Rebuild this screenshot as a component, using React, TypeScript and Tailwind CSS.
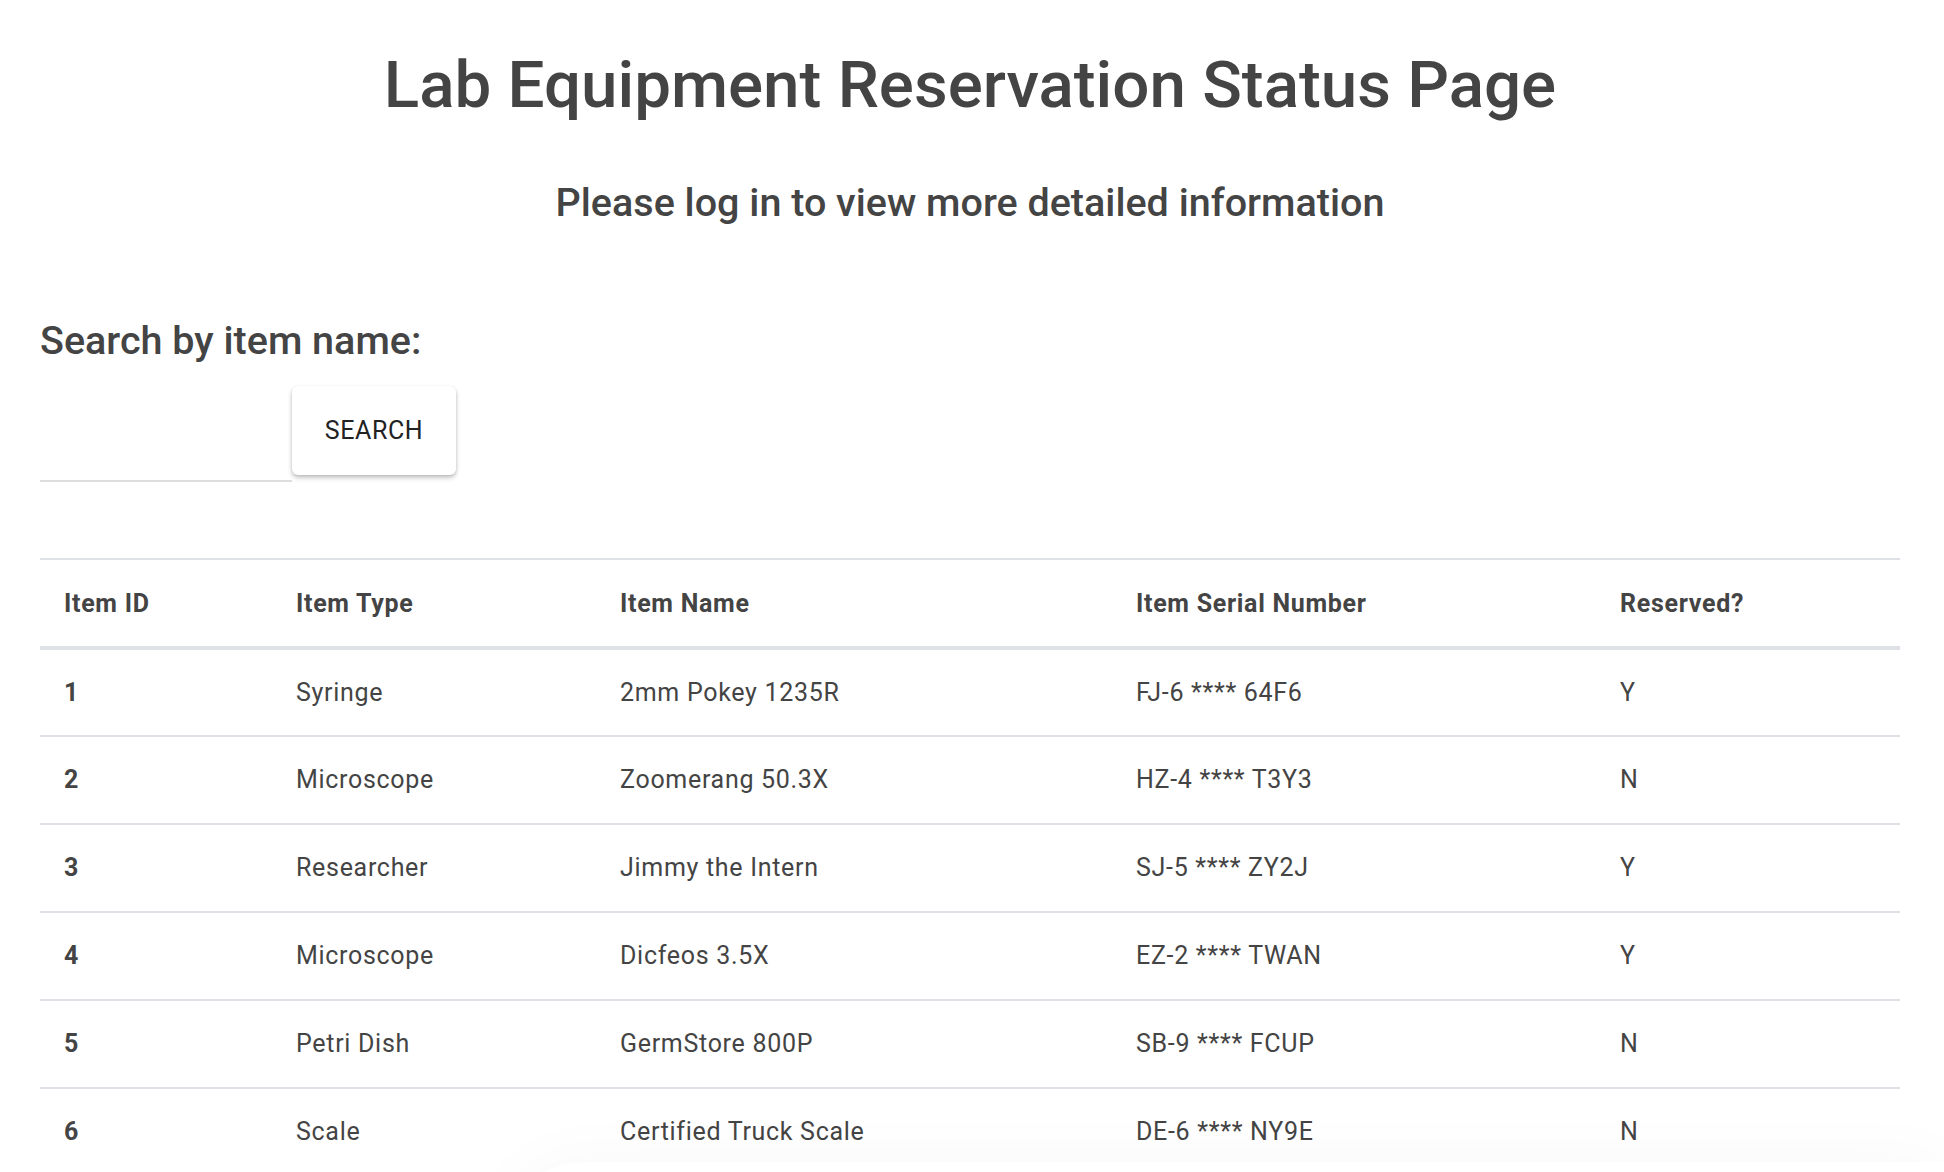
import React, { useState } from "react";

interface Item {
  id: number;
  type: string;
  name: string;
  serial: string;
  reserved: string;
}

const items: Item[] = [
  { id: 1, type: "Syringe", name: "2mm Pokey 1235R", serial: "FJ-6 **** 64F6", reserved: "Y" },
  { id: 2, type: "Microscope", name: "Zoomerang 50.3X", serial: "HZ-4 **** T3Y3", reserved: "N" },
  { id: 3, type: "Researcher", name: "Jimmy the Intern", serial: "SJ-5 **** ZY2J", reserved: "Y" },
  { id: 4, type: "Microscope", name: "Dicfeos 3.5X", serial: "EZ-2 **** TWAN", reserved: "Y" },
  { id: 5, type: "Petri Dish", name: "GermStore 800P", serial: "SB-9 **** FCUP", reserved: "N" },
  { id: 6, type: "Scale", name: "Certified Truck Scale", serial: "DE-6 **** NY9E", reserved: "N" },
];

const headers = ["Item ID", "Item Type", "Item Name", "Item Serial Number", "Reserved?"];

const App = () => {
  const [query, setQuery] = useState("");

  return (
    <div
      className="min-h-screen bg-white pl-[40px] pr-[44px] text-[#444]"
      style={{ fontFamily: "Roboto, 'Liberation Sans', sans-serif" }}
    >
      <h1 className="pt-[52px] text-center text-[65.5px] font-medium leading-[66px]">
        Lab Equipment Reservation Status Page
      </h1>
      <h2 className="mt-[65px] text-center text-[39.5px] font-medium leading-[40px]">
        Please log in to view more detailed information
      </h2>

      <h3 className="mt-[98px] text-[39.5px] font-medium leading-[40px]">Search by item name:</h3>
      <div className="mt-[25px] flex items-start">
        <input
          type="text"
          value={query}
          onChange={(e) => setQuery(e.target.value)}
          className="h-[96px] w-[252px] border-b-2 border-[#dddddd] bg-transparent text-[24px] outline-none"
        />
        <button
          type="button"
          className="h-[89px] w-[164px] rounded-[6px] bg-white text-[25px] tracking-[0.6px] text-[#222] shadow-[0_3px_5px_rgba(0,0,0,0.2),0_1px_3px_rgba(0,0,0,0.12)]"
        >
          SEARCH
        </button>
      </div>

      <table className="mt-[76px] w-full table-fixed border-collapse border-t-2 border-[#dee2e6] text-[25px] tracking-[0.7px]">
        <colgroup>
          <col className="w-[232px]" />
          <col className="w-[324px]" />
          <col className="w-[516px]" />
          <col className="w-[484px]" />
          <col className="w-[304px]" />
        </colgroup>
        <thead>
          <tr>
            {headers.map((h) => (
              <th
                key={h}
                className="h-[89px] border-b-4 border-[#dee2e6] px-[24px] pt-[2px] text-left align-middle font-bold"
              >
                {h}
              </th>
            ))}
          </tr>
        </thead>
        <tbody>
          {items.map((item) => (
            <tr key={item.id} className="h-[88px]">
              <td className="border-b-2 border-[#dee2e6] px-[24px] font-bold">{item.id}</td>
              <td className="border-b-2 border-[#dee2e6] px-[24px]">{item.type}</td>
              <td className="border-b-2 border-[#dee2e6] px-[24px]">{item.name}</td>
              <td className="border-b-2 border-[#dee2e6] px-[24px]">{item.serial}</td>
              <td className="border-b-2 border-[#dee2e6] px-[24px]">{item.reserved}</td>
            </tr>
          ))}
        </tbody>
      </table>

      {/* faint shadow of a panel sitting just below the fold */}
      <div className="pointer-events-none fixed bottom-[-90px] right-0 h-[100px] w-[1440px] rounded-tl-[80px] bg-white shadow-[0_0_70px_rgba(0,0,0,0.03)]" />
    </div>
  );
};

export default App;
